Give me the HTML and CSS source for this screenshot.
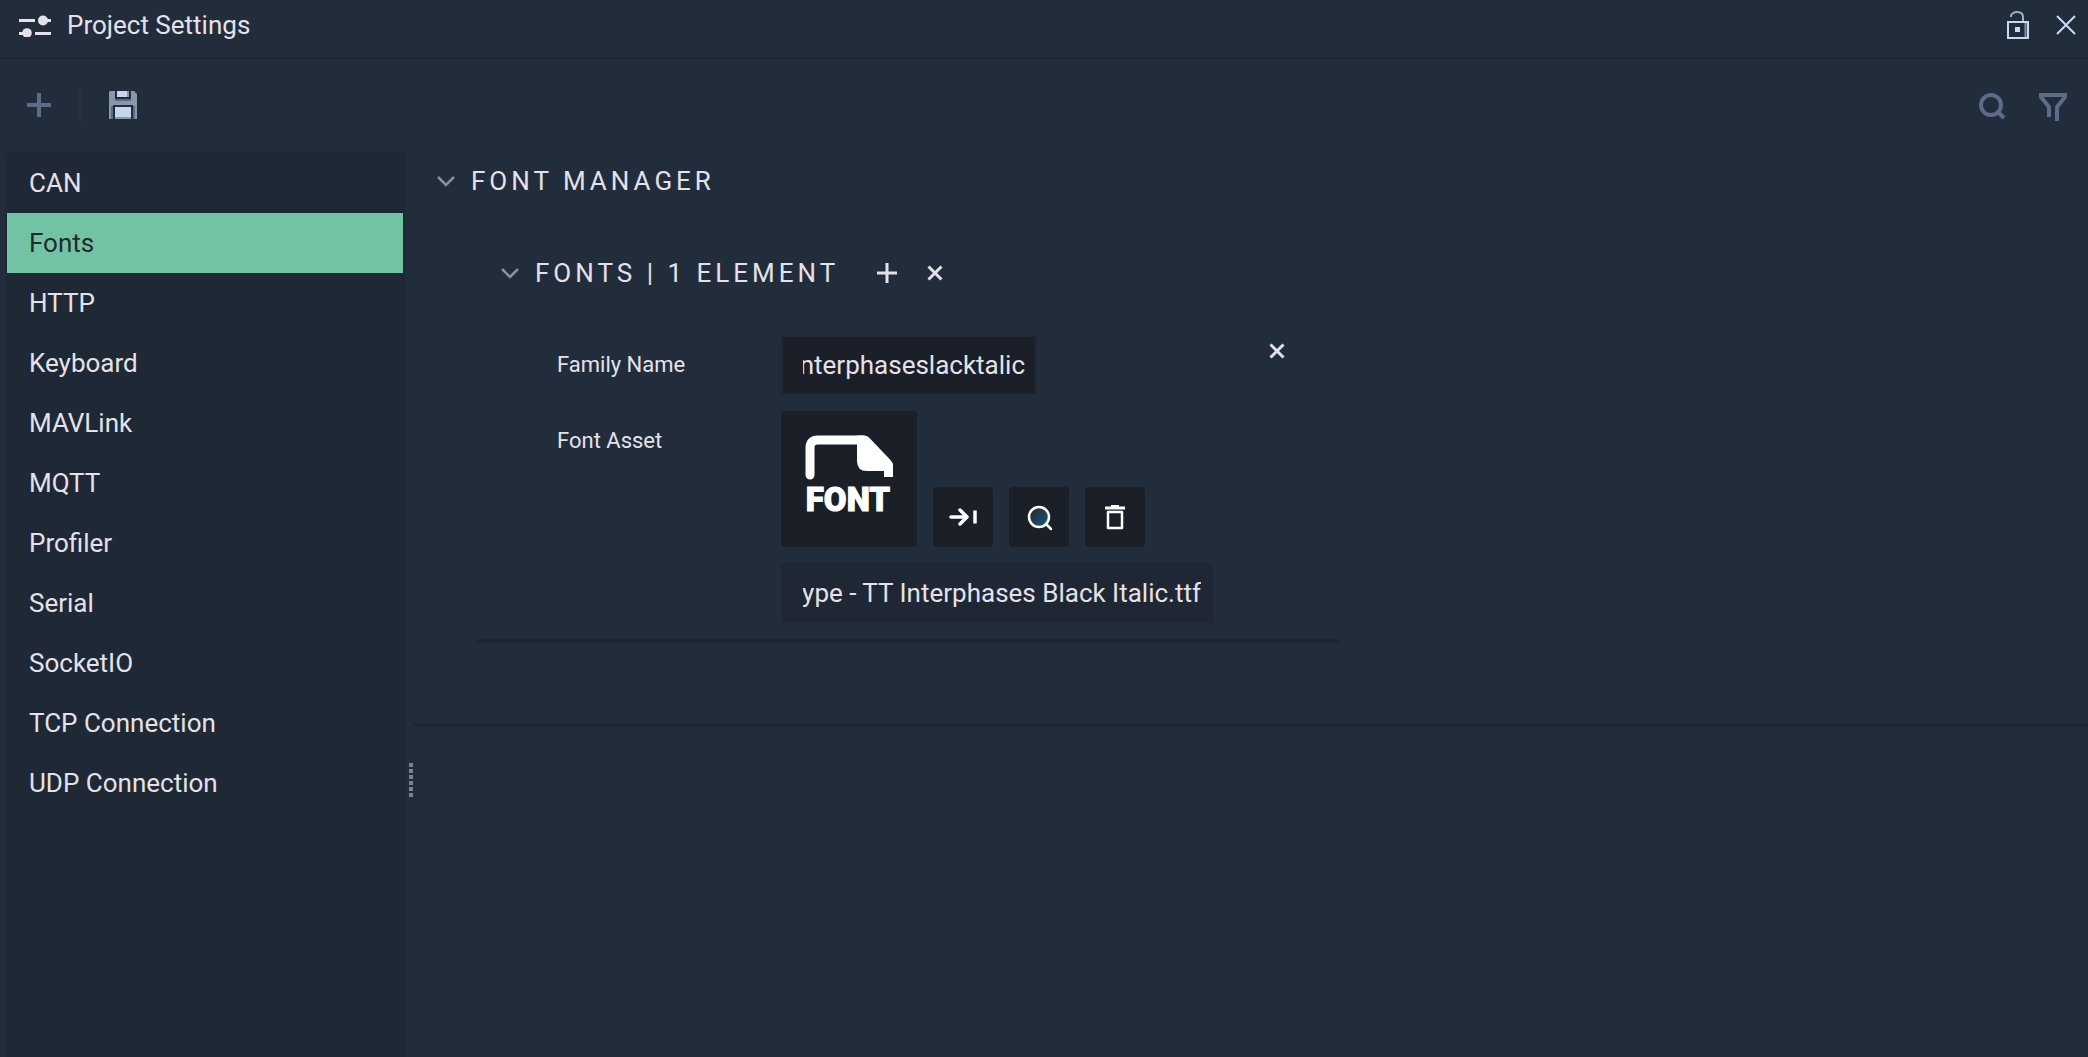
FILE: index.html
```html
<!DOCTYPE html>
<html lang="en">
<head>
<meta charset="utf-8">
<title>Project Settings</title>
<link rel="stylesheet" href="styles.css">
</head>
<body>
<div class="window">
  <header class="titlebar">
    <svg class="titlebar-icon" width="32" height="24" viewBox="0 0 32 24" fill="currentColor" aria-hidden="true">
      <path d="M0 6h16v3H0zM26 6h6v3h-6zM0 19h6v3H0zM16 19h16v3H16z"/>
      <circle cx="24" cy="7.500" r="5"/><circle cx="8" cy="20" r="4.800"/>
    </svg>
    <h1 class="title">Project Settings</h1>
    <button class="icon-button bright" aria-label="Lock">
      <svg width="22" height="28" viewBox="0 0 22 28" fill="none" stroke="currentColor" stroke-width="2">
        <path d="M1 11h20v16H1z"/><path stroke-opacity=".75" d="M4 6V5c0-2 3-4 6-4 4 0 6 2 6 5v5"/><path d="M18.500 11v15" stroke-opacity=".6"/>
        <path d="M8 16h5v5H8z" fill="currentColor" stroke="none"/>
      </svg>
    </button>
    <button class="icon-button bright" aria-label="Close">
      <svg width="20" height="20" viewBox="0 0 20 20" fill="none" stroke="currentColor" stroke-width="2"><path d="M1 1l18 18M19 1L1 19"/></svg>
    </button>
  </header>

  <div class="toolbar">
    <button class="icon-button dim" aria-label="Add">
      <svg width="24" height="24" viewBox="0 0 24 24" fill="none" stroke="currentColor" stroke-width="4"><path d="M12 0v24M0 12h24"/></svg>
    </button>
    <span class="toolbar-rule"></span>
    <button class="icon-button save" aria-label="Save">
      <svg width="28" height="28" viewBox="0 0 28 28">
        <path fill="#8997ae" d="M0 1l1-1h5v8h16V0h3l3 3v25h-4V14H4v14H0z"/>
        <path fill="#5d6a80" d="M6 8h16v2H6zM2 15h2v13H2zM24 15h2v13h-2z"/>
        <path fill="#c4d6ee" d="M8 0h10v6H8zM6 16h16v10H6z"/>
        <path fill="#8997ae" d="M18 0h2v6h-2zM6 26h16v2H6z"/>
      </svg>
    </button>
    <span class="spacer"></span>
    <button class="icon-button dim" aria-label="Search">
      <svg width="28" height="32" viewBox="0 -4 28 32" fill="none" stroke="currentColor" stroke-width="4"><circle cx="12" cy="12" r="10"/><path d="M19 19l6 6"/></svg>
    </button>
    <button class="icon-button dim" aria-label="Filter">
      <svg width="28" height="32" viewBox="0 -4 28 32" fill="none" stroke="currentColor" stroke-width="4"><path d="M10 24V14L2 4V2h24v2l-8 10v14"/></svg>
    </button>
  </div>

  <div class="body">
    <nav class="sidebar">
      <a class="nav-item" href="#can">CAN</a>
      <a class="nav-item selected" href="#fonts" aria-current="page">Fonts</a>
      <a class="nav-item" href="#http">HTTP</a>
      <a class="nav-item" href="#keyboard">Keyboard</a>
      <a class="nav-item" href="#mavlink">MAVLink</a>
      <a class="nav-item" href="#mqtt">MQTT</a>
      <a class="nav-item" href="#profiler">Profiler</a>
      <a class="nav-item" href="#serial">Serial</a>
      <a class="nav-item" href="#socketio">SocketIO</a>
      <a class="nav-item" href="#tcp">TCP Connection</a>
      <a class="nav-item" href="#udp">UDP Connection</a>
    </nav>
    <div class="splitter"><i></i><i></i><i></i><i></i><i></i><i></i></div>

    <main class="content">
      <section class="section">
        <div class="group-head">
          <button class="chevron" aria-label="Collapse Font Manager">
            <svg width="18" height="12" viewBox="0 0 18 12" fill="none" stroke="currentColor" stroke-width="2.500"><path d="M1 2l8 8 8-8"/></svg>
          </button>
          <h2 class="heading">FONT MANAGER</h2>
        </div>
        <div class="group-head nested">
          <button class="chevron" aria-label="Collapse Fonts">
            <svg width="18" height="12" viewBox="0 0 18 12" fill="none" stroke="currentColor" stroke-width="2.500"><path d="M1 2l8 8 8-8"/></svg>
          </button>
          <h3 class="heading">FONTS | 1 ELEMENT</h3>
          <div class="head-actions">
            <button class="small-button" aria-label="Add font">
              <svg width="20" height="20" viewBox="0 0 20 20" fill="none" stroke="currentColor" stroke-width="3"><path d="M10 0v20M0 10h20"/></svg>
            </button>
            <button class="small-button" aria-label="Clear fonts">
              <svg width="16" height="16" viewBox="0 0 16 16" fill="none" stroke="currentColor" stroke-width="3"><path d="M1.500 1.500l13 13M14.500 1.500l-13 13"/></svg>
            </button>
          </div>
        </div>
        <div class="element">
          <div class="fields">
            <label class="label" for="family">Family Name</label>
            <input class="text-field family" id="family" type="text" dir="rtl" value="Interphaseslacktalic">
            <label class="label" for="asset">Font Asset</label>
            <div class="asset">
              <div class="asset-row">
                <div class="asset-preview">
                  <svg width="136" height="136" viewBox="0 0 136 136" aria-hidden="true">
                    <path fill="none" stroke="#fff" stroke-width="9" stroke-linecap="round" d="M29 64V37q0-8 8-8H82"/>
                    <path fill="#fff" d="M76 24.500h7q3 0 5 2l21 22q3 3 3 6V66h-9v-6H86q-10 0-10-10z"/>
                    <text class="asset-word" x="67" y="100" text-anchor="middle">FONT</text>
                  </svg>
                </div>
                <button class="tile-button" aria-label="Use selected asset">
                  <svg width="28" height="20" viewBox="0 0 28 20" fill="none" stroke="currentColor" stroke-width="3.500" stroke-linecap="round" stroke-linejoin="round"><path d="M2 10h16M11 3l7 7-7 7"/><path stroke-linecap="butt" d="M26 3.500v13"/></svg>
                </button>
                <button class="tile-button" aria-label="Browse assets">
                  <svg width="28" height="28" viewBox="0 0 28 28" stroke="currentColor" stroke-width="2.500" stroke-linecap="round">
                    <defs><linearGradient id="lens" x1="0" y1="0" x2="1" y2="1"><stop offset="0.200" stop-color="#24303a"/><stop offset="1" stop-color="#175a85"/></linearGradient></defs>
                    <circle cx="14" cy="14" r="10" fill="url(#lens)"/><path d="M21 21l5 5"/>
                  </svg>
                </button>
                <button class="tile-button" aria-label="Clear asset">
                  <svg width="20" height="26" viewBox="0 0 20 26" fill="none" stroke="currentColor"><path stroke-width="3" d="M0 4h20"/><path stroke-width="2" d="M6 2h8"/><path stroke-width="2.500" stroke-linejoin="round" d="M3 8h14v16H3z"/></svg>
                </button>
              </div>
              <input class="text-field file" id="asset" type="text" dir="rtl" readonly value="TypeType - TT Interphases Black Italic.ttf">
            </div>
          </div>
          <button class="small-button" aria-label="Remove element">
            <svg width="16" height="16" viewBox="0 0 16 16" fill="none" stroke="currentColor" stroke-width="3"><path d="M1.500 1.500l13 13M14.500 1.500l-13 13"/></svg>
          </button>
        </div>
      </section>
    </main>
  </div>
</div>
</body>
</html>
```
FILE: styles.css
```css
:root {
  --bg: #222d3c;
  --panel: #1e2935;
  --well: #1a1f28;
  --line: #1d2734;
  --text: #e4e2e8;
  --dim: #5b6b88;
}

* { box-sizing: border-box; }

body {
  margin: 0;
  background: var(--bg);
  color: var(--text);
  font: 26px/32px Roboto, "Liberation Sans", sans-serif;
}

button {
  display: flex;
  align-items: center;
  justify-content: center;
  padding: 0;
  border: 0;
  background: none;
  color: inherit;
}

h1, h2, h3 {
  margin: 0;
  font-size: 26px;
  font-weight: 400;
}

.window {
  display: flex;
  flex-direction: column;
  min-height: 100vh;
}

.titlebar {
  display: flex;
  align-items: center;
  gap: 27px;
  padding: 9px 12px 16px 19px;
  border-bottom: 2px solid var(--line);
}
.titlebar-icon { margin-right: -11px; }
.title { flex: 1; }

.icon-button svg, .small-button svg, .tile-button svg { display: block; }
.bright { color: #c4dcf6; }
.dim { color: var(--dim); }

.toolbar {
  display: flex;
  align-items: center;
  gap: 28px;
  height: 92px;
  padding: 0 21px 0 27px;
}
.toolbar-rule {
  width: 4px;
  height: 32px;
  background: #263041;
}
.save { margin-left: -2px; }
.spacer { flex: 1; }
.toolbar .icon-button:last-child { margin-left: 4px; }

.body {
  display: flex;
  flex: 1;
  padding-left: 5px;
}

.sidebar {
  width: 400px;
  padding: 2px;
  border-radius: 4px 4px 0 0;
  background: var(--panel);
}
.nav-item {
  display: block;
  padding: 14px 22px;
  color: var(--text);
  text-decoration: none;
}
.nav-item.selected {
  background: #72c3a4;
  color: #232a2e;
}

.splitter {
  display: flex;
  flex-direction: column;
  gap: 2px;
  width: 8px;
  padding: 612px 0 0 4px;
}
.splitter i {
  width: 4px;
  height: 4px;
  background: #7b818c;
}

.content { flex: 1; }
.section {
  padding-bottom: 80px;
  border-bottom: 4px solid var(--line);
}

.group-head {
  display: flex;
  align-items: center;
  gap: 16px;
  height: 60px;
  padding-left: 24px;
}
.group-head.nested {
  margin: 32px 0;
  padding-left: 88px;
}
.chevron { color: #8b8f9b; }
.heading { letter-spacing: 4px; }
.head-actions {
  display: flex;
  gap: 16px;
  padding-left: 16px;
}
.small-button {
  width: 32px;
  height: 32px;
}

.element {
  display: flex;
  max-width: 864px;
  margin-left: 64px;
  padding: 0 48px 16px 80px;
  border-bottom: 4px solid var(--line);
}
.fields {
  display: grid;
  flex: 1;
  grid-template-columns: 224px 1fr;
  gap: 16px 0;
}
.label {
  font-size: 22px;
  line-height: 60px;
}

.text-field {
  height: 60px;
  padding: 0 10px 0 20px;
  border: 2px solid #1f2835;
  outline: 0;
  background: var(--well);
  color: var(--text);
  font: inherit;
}
.family { width: 256px; }
.file {
  width: 432px;
  border-color: #1f2735;
  background: #1f2735;
}

.asset {
  display: grid;
  gap: 16px;
}
.asset-row {
  display: flex;
  align-items: flex-end;
  gap: 16px;
}
.asset-preview {
  height: 136px;
  border-radius: 4px;
  background: var(--well);
}
.asset-word {
  fill: #fff;
  stroke: #fff;
  stroke-width: 1px;
  font-size: 33px;
  font-weight: 900;
}
.tile-button {
  width: 60px;
  height: 60px;
  border-radius: 4px;
  background: var(--well);
  color: #fff;
}
```
